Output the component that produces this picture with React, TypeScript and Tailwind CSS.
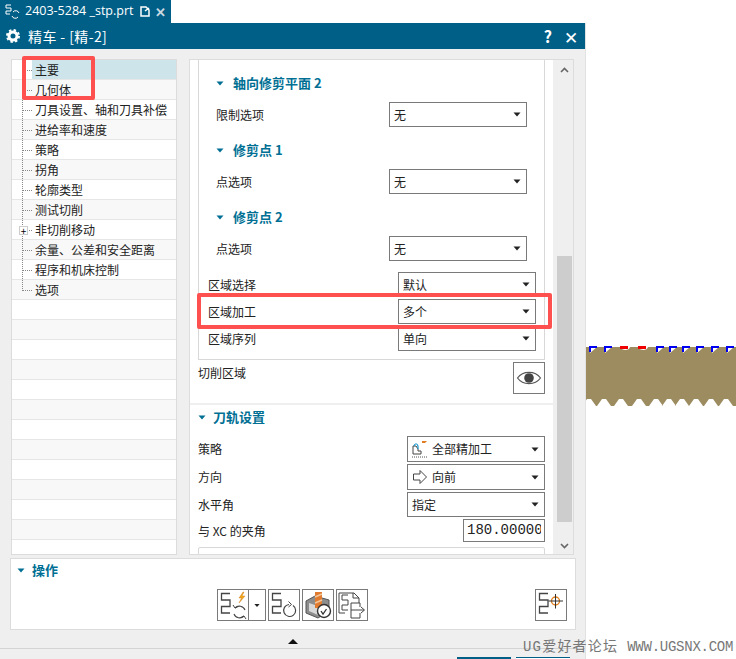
import React from "react";

const FONT = "font-['Noto_Sans_CJK_SC','Noto_Sans',sans-serif]";

const treeItems = [
  "主要",
  "几何体",
  "刀具设置、轴和刀具补偿",
  "进给率和速度",
  "策略",
  "拐角",
  "轮廓类型",
  "测试切削",
  "非切削移动",
  "余量、公差和安全距离",
  "程序和机床控制",
  "选项",
  ...Array(13).fill(""),
];

const Caret = ({ className = "" }: { className?: string }) => (
  <svg width="8" height="5" viewBox="0 0 8 5" className={className}>
    <path d="M0.5 0.5h7L4 4.5z" fill="currentColor" />
  </svg>
);

const OpGlyph = () => (
  <path d="M12 3.5H3.5V10H12V16.5H3.5V23H12" fill="none" stroke="#444" strokeWidth="1.3" />
);

const Select = ({
  value,
  height = "h-[25px]",
  icon,
}: {
  value: string;
  height?: string;
  icon?: React.ReactNode;
}) => (
  <div className={`w-[138px] ${height} flex items-center border border-[#7a7a7a] bg-white pl-1 pr-[5px] text-[12px] text-[#222]`}>
    {icon}
    <span className="flex-1">{value}</span>
    <Caret className="text-[#222]" />
  </div>
);

const Heading = ({ title, gap = "mr-[9px]" }: { title: string; gap?: string }) => (
  <div className="flex h-[20px] items-center text-[13px] font-bold text-[#006f94]">
    <Caret className={`${gap} text-[#006f94]`} />
    <span>{title}</span>
  </div>
);

const StrategyIcon = () => (
  <svg width="17" height="18" viewBox="0 0 17 18" className="mr-[3px]">
    <path d="M1 13V6h3l2 3v2h3v3H1z" fill="none" stroke="#444" />
    <path d="M2 6c1-3 3-3 4 0v3" fill="none" stroke="#1a9bd0" strokeWidth="1.2" />
    <path d="M10 1h5l-2 2h-3z" fill="#e07b20" />
    <path d="M0 17h16" stroke="#555" strokeDasharray="1 1" />
  </svg>
);

const ArrowIcon = () => (
  <svg width="17" height="16" viewBox="0 0 17 16" className="mr-[3px]">
    <path d="M1.5 5h6.500V1.500L14.500 8 8 14.500V11H1.500z" fill="none" stroke="#444" />
  </svg>
);

const EyeIcon = () => (
  <svg width="26" height="18" viewBox="0 0 26 18">
    <path d="M1.500 9C7 1.500 19 1.500 24.500 9 19 16.500 7 16.500 1.500 9z" fill="none" stroke="#555" strokeWidth="1.200" />
    <circle cx="13" cy="9" r="4.800" fill="#444" />
  </svg>
);

const Generate = () => (
  <svg width="30" height="30" viewBox="0 0 30 30">
    <OpGlyph />
    <path d="M25 2l-4 6h2.500l-2.500 5 6-7h-3l2-4z" fill="#f0a818" stroke="#d07010" strokeWidth="0.400" />
    <path d="M27 20a6 6 0 0 0-10-2M16 24a6 6 0 0 0 10 2" fill="none" stroke="#444" strokeWidth="1.100" />
    <path d="M15 15l2 3 3-1.500M28 29l-2-3-3 1.500" fill="none" stroke="#444" />
  </svg>
);

const Replay = () => (
  <svg width="30" height="30" viewBox="0 0 30 30">
    <OpGlyph />
    <path d="M24 15.500a6 6 0 1 1-4-1" fill="none" stroke="#444" strokeWidth="1.200" />
    <path d="M19.500 11.500l3 3-3 2.500" fill="none" stroke="#444" />
  </svg>
);

const Verify = () => (
  <svg width="30" height="30" viewBox="0 0 30 30">
    <path d="M3 11l9-5 14 4v11l-11 7-12-5z" fill="#8d8d8d" stroke="#555" />
    <path d="M6 13l9 3v9l-9-4z" fill="#d8d8d8" />
    <rect x="12" y="2" width="7" height="16" fill="#e07b30" />
    <path d="M12 7l7-3M12 13l7-3" stroke="#f3c79a" strokeWidth="1.500" />
    <circle cx="21" cy="21" r="6.500" fill="#fff" stroke="#333" strokeWidth="1.400" />
    <path d="M18 21l2 3 3.500-5" fill="none" stroke="#333" strokeWidth="1.300" />
  </svg>
);

const ListOut = () => (
  <svg width="30" height="30" viewBox="0 0 30 30">
    <path d="M8 23H2V3h15l5 5v5" fill="none" stroke="#444" />
    <path d="M16 3v5h6" fill="none" stroke="#444" />
    <path d="M11 5H5v5h6v5H5v5h6" fill="none" stroke="#444" />
    <path d="M14 13v15h9v-5M14 20h13M24 17l3.500 3-3.500 3M14 13h9v4" fill="none" stroke="#444" />
  </svg>
);

const Target = () => (
  <svg width="30" height="30" viewBox="0 0 30 30">
    <OpGlyph />
    <circle cx="19.500" cy="11" r="4" fill="none" stroke="#e08020" strokeWidth="1.400" />
    <path d="M12.500 11h14.500M19.500 4v14.500" stroke="#333" />
  </svg>
);

const Tool = ({ children }: { children: React.ReactNode }) => (
  <div className="flex h-[32px] w-[32px] items-center justify-center border border-[#7a7a7a] bg-white">
    {children}
  </div>
);

const notches = [4, 19, 36, 54, 71, 84, 97, 111, 126, 141];

// 螺纹截面：底边用锯齿, 顶部标记走刀路径
const bottomEdge = [...notches]
  .reverse()
  .map((x) => `L${x + 6} 62 L${x + 1} 55 L${x - 3} 55 L${x - 8} 62`)
  .join(" ");

const ThreadCanvas = () => (
  <svg width="150" height="66" viewBox="0 0 150 66" className="absolute left-0 top-[321px]">
    <path d={`M0 3H150V62 ${bottomEdge} L0 62z`} fill="#9c8c60" />
    {notches.map((x, i) =>
      i === 2 || i === 3 ? (
        <g key={x}>
          <path d={`M${x - 2} 3h10c-1 4-8 4-10 0z`} fill="#fff" />
          <rect x={x - 2} y="2" width="8" height="3" fill="#f00000" />
        </g>
      ) : (
        <g key={x}>
          <path d={`M${x} 3h7L${x} 9z`} fill="#fff" />
          <path d={`M${x} 8V3h7`} fill="none" stroke="#0000f0" strokeWidth="2" />
        </g>
      ),
    )}
  </svg>
);

export default function App() {
  return (
    <div className={`relative flex h-[659px] w-[736px] flex-col overflow-hidden bg-white ${FONT}`}>
      {/* file tab */}
      <div className="flex h-[23px] bg-white">
        <div className="flex w-[171px] items-center gap-[5px] bg-[#005f87] px-[5px] text-[12px] text-white">
          <svg width="15" height="16" viewBox="0 0 15 16">
            <path d="M6 1H1v3h5v3H1v3h4" fill="none" stroke="#fff" />
            <path d="M14 9a3.500 3.500 0 0 0-6-1M7 12a3.500 3.500 0 0 0 6 1" fill="none" stroke="#fff" />
          </svg>
          <span className="flex-1 whitespace-nowrap font-['Open_Sans',sans-serif] text-[12.5px]">2403-5284 _stp.prt</span>
          <svg width="10" height="11" viewBox="0 0 10 11">
            <path d="M1 1h5l3 3v6H1zM5 5l4-3" fill="none" stroke="#fff" strokeWidth="1.500" />
          </svg>
          <span className="text-[13px] font-bold leading-none text-[#c8d8e0]">✕</span>
        </div>
      </div>

      <div className="flex flex-1">
        {/* dialog */}
        <div className="flex w-[586px] flex-col border-r border-[#e2e2e2] bg-[#efefef]">
          <div className="flex h-[26px] items-center bg-[#005f87] pl-[6px] pr-[7px] text-white">
            <svg width="14" height="14" viewBox="0 0 14 14" className="mr-[8px]">
              <circle cx="7" cy="7" r="4" fill="none" stroke="#fff" strokeWidth="3" />
              <circle cx="7" cy="7" r="6" fill="none" stroke="#fff" strokeWidth="2" strokeDasharray="2.400 2.300" />
            </svg>
            <span className="flex-1 text-[14px] tracking-[0.4px]">精车 - [精-2]</span>
            <span className="mr-[12px] text-[16px] font-bold leading-none">?</span>
            <span className="text-[17px] leading-none">✕</span>
          </div>

          <div className="flex h-[506px] pl-[11px] pt-[10px]">
            {/* tree */}
            <div className="relative w-[166px] overflow-hidden border border-[#dcdcdc] bg-white">
              {treeItems.map((item, i) => (
                <div
                  key={i}
                  className={`flex h-[20px] items-center border-b border-[#e6e6e6] pl-[20px] text-[12px] text-[#222] ${
                    i % 2 === 1 ? "bg-[#f8f8f8]" : "bg-white"
                  }`}
                >
                  <span className={`w-full pl-[3px] leading-[19px] ${i === 0 ? "bg-[#cce4ea]" : ""}`}>{item}</span>
                </div>
              ))}
              <div className="absolute left-[10px] top-0 h-[231px] border-l border-dotted border-[#888]" />
              {treeItems.slice(0, 12).map((_, i) => (
                <div
                  key={i}
                  className="absolute left-[11px] w-[9px] border-t border-dotted border-[#888]"
                  style={{ top: 10 + i * 20 }}
                />
              ))}
              <div className="absolute left-[7px] top-[166px] flex h-[9px] w-[9px] items-center justify-center border border-[#ccc] bg-white text-[10px] leading-none text-black">
                +
              </div>
            </div>

            {/* options */}
            <div className="ml-[12px] flex w-[385px] border border-[#dcdcdc] bg-[#efefef]">
              <div className="flex h-full w-[363px] flex-col overflow-hidden">
                <div className="h-[343px] shrink-0 bg-white pl-[8px] pr-[8px]">
                  <div className="h-[300px] border-x border-b border-[#d8d8d8] pl-[17px] pr-[17px] pt-[13px] text-[12px] text-[#222]">
                    <Heading title="轴向修剪平面 2" />
                    <div className="mt-[9px] flex items-center justify-between">
                      <span>限制选项</span>
                      <Select value="无" />
                    </div>
                    <div className="mt-[13px]"><Heading title="修剪点 1" /></div>
                    <div className="mt-[9px] flex items-center justify-between">
                      <span>点选项</span>
                      <Select value="无" />
                    </div>
                    <div className="mt-[13px]"><Heading title="修剪点 2" /></div>
                    <div className="mt-[9px] flex items-center justify-between">
                      <span>点选项</span>
                      <Select value="无" />
                    </div>
                    <div className="-ml-[8px] -mr-[9px] mt-[11px] flex flex-col gap-[2px]">
                      <div className="flex items-center justify-between">
                        <span>区域选择</span>
                        <Select value="默认" />
                      </div>
                      <div className="flex items-center justify-between">
                        <span>区域加工</span>
                        <Select value="多个" />
                      </div>
                      <div className="flex items-center justify-between">
                        <span>区域序列</span>
                        <Select value="单向" />
                      </div>
                    </div>
                  </div>
                  <div className="mt-[2px] flex items-start justify-between text-[12px] text-[#222]">
                    <span className="mt-[2px]">切削区域</span>
                    <div className="flex h-[32px] w-[32px] items-center justify-center border border-[#7a7a7a] bg-white">
                      <EyeIcon />
                    </div>
                  </div>
                </div>

                <div className="mt-[2px] flex-1 overflow-hidden bg-white pl-[8px] pr-[8px] pt-[2px] text-[12px] text-[#222]">
                  <Heading title="刀轨设置" gap="mr-[7px]" />
                  <div className="mt-[9px] flex flex-col gap-[2px]">
                    <div className="flex items-center justify-between">
                      <span>策略</span>
                      <Select value="全部精加工" height="h-[26px]" icon={<StrategyIcon />} />
                    </div>
                    <div className="flex items-center justify-between">
                      <span>方向</span>
                      <Select value="向前" height="h-[26px]" icon={<ArrowIcon />} />
                    </div>
                    <div className="flex items-center justify-between">
                      <span>水平角</span>
                      <Select value="指定" />
                    </div>
                    <div className="flex items-center justify-between">
                      <span>与 XC 的夹角</span>
                      <div className="h-[23px] w-[82px] border border-[#7a7a7a] bg-white pl-[3px] pr-[3px] font-['Liberation_Mono',monospace] text-[14px] leading-[21px] text-[#222]">
                        <div className="overflow-hidden whitespace-nowrap">180.00000</div>
                      </div>
                    </div>
                    <div className="mt-[3px] h-[20px] rounded-t-[2px] border border-[#d8d8d8] pl-[24px] pt-[4px] text-[13px] font-bold leading-[16px] text-[#006f94]">
                      工具
                    </div>
                  </div>
                </div>
              </div>

              {/* scrollbar */}
              <div className="flex w-[20px] flex-col items-center pl-[3px]">
                <svg width="9" height="6" viewBox="0 0 9 6" className="mt-[7px]">
                  <path d="M1 5l3.500-3.500L8 5" fill="none" stroke="#666" strokeWidth="1.600" />
                </svg>
                <div className="mt-[183px] h-[266px] w-[15px] bg-[#cdcdcd]" />
                <svg width="9" height="6" viewBox="0 0 9 6" className="mt-[21px]">
                  <path d="M1 1l3.500 3.500L8 1" fill="none" stroke="#666" strokeWidth="1.600" />
                </svg>
              </div>
            </div>
          </div>

          {/* operations */}
          <div className="ml-[10px] mr-[9px] mt-[3px] flex h-[72px] flex-col border border-[#dcdcdc] bg-white">
            <div className="mt-px flex h-[20px] items-center pl-[6px]">
              <Heading title="操作" gap="mr-[7px]" />
            </div>
            <div className="mt-[9px] flex pl-[206px] pr-[8px]">
              <div className="flex h-[32px] border border-[#7a7a7a] bg-white">
                <div className="flex w-[31px] items-center justify-center border-r border-[#7a7a7a]">
                  <Generate />
                </div>
                <div className="flex w-[16px] items-center justify-center">
                  <Caret className="scale-75 text-[#222]" />
                </div>
              </div>
              <div className="ml-[2px] flex gap-[2px]">
                <Tool><Replay /></Tool>
                <Tool><Verify /></Tool>
                <Tool><ListOut /></Tool>
              </div>
              <div className="ml-auto">
                <Tool><Target /></Tool>
              </div>
            </div>
          </div>

          <div className="flex h-[19px] items-center justify-center border-b border-[#d4d4d4] pt-[4px]">
            <svg width="10" height="6" viewBox="0 0 10 6"><path d="M0 6l5-5 5 5z" fill="#111" /></svg>
          </div>
          <div className="flex flex-1 items-end gap-[5px] pl-[457px]">
            <div className="h-[2px] w-[54px] bg-[#005f87]" />
            <div className="h-[2px] w-[54px] border-t border-[#005f87] bg-white" />
          </div>
        </div>

        {/* graphics area */}
        <div className="relative flex-1 bg-white">
          <ThreadCanvas />
        </div>
      </div>

      {/* annotations */}
      <div className="absolute left-[22px] top-[56px] h-[44px] w-[73px] rounded-[2px] border-4 border-[#ff5050]" />
      <div className="absolute left-[197px] top-[293px] h-[36px] w-[355px] rounded-[2px] border-4 border-[#ff5050]" />
      <div className="absolute left-[523px] top-[638px] flex whitespace-nowrap font-['Liberation_Mono','Noto_Sans_CJK_SC',monospace] text-[14px] leading-[18px] text-[#777]">
        <span className="tracking-[1.2px]">UG爱好者论坛</span>
        <span className="ml-[9px] tracking-[-0.25px]">WWW.UGSNX.COM</span>
      </div>
    </div>
  );
}
